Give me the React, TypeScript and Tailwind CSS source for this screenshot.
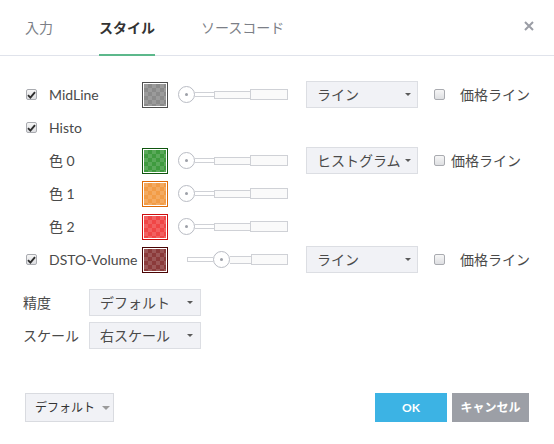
import { Fragment } from "react";

const tabs = ["入力", "スタイル", "ソースコード"];

function Check({ checked }: { checked: boolean }) {
  return (
    <span className="flex h-[11px] w-[11px] items-center justify-center rounded-[2px] border border-[#a9abb0] bg-gradient-to-b from-[#f6f6f6] to-[#dedfe2]">
      {checked && (
        <svg width="9" height="8" viewBox="0 0 9 8">
          <path d="M1 4.2 L3.4 6.6 L8 1.2" fill="none" stroke="#2e2e2e" strokeWidth="1.9" />
        </svg>
      )}
    </span>
  );
}

function Caret({ size = 6, color = "#5a5a5a" }: { size?: number; color?: string }) {
  return (
    <svg width={size} height={size / 2} viewBox="0 0 6 3">
      <path d="M0 0 H6 L3 3 Z" fill={color} />
    </svg>
  );
}

function Swatch({ id, border, fill }: { id: string; border: string; fill: string }) {
  return (
    <span className="flex h-[26px] w-[26px] items-center justify-center border bg-white" style={{ borderColor: border }}>
      <svg width="22" height="22" viewBox="0 0 22 22">
        <defs>
          <pattern id={id} width="8" height="8" patternUnits="userSpaceOnUse">
            <rect width="4" height="4" fill="#fff" fillOpacity="0.14" />
            <rect x="4" y="4" width="4" height="4" fill="#fff" fillOpacity="0.14" />
          </pattern>
        </defs>
        <rect width="22" height="22" fill={fill} />
        <rect width="22" height="22" fill={`url(#${id})`} />
      </svg>
    </span>
  );
}

function Knob() {
  return (
    <span className="flex h-[17px] w-[17px] shrink-0 items-center justify-center rounded-full border border-[#b9bcc4] bg-white">
      <span className="h-[3px] w-[3px] rounded-full bg-[#9da0a8]" />
    </span>
  );
}

function Slider({ right }: { right?: boolean }) {
  const thin = "h-[5px] border-y border-[#cfd1d6] bg-white";
  return (
    <div className="ml-[10px] flex w-[110px] items-center">
      {right ? (
        <Fragment>
          <span className={`ml-[9px] w-[26px] border-l ${thin}`} />
          <Knob />
          <span className="h-[8px] w-[21px] border-y border-[#cfd1d6] bg-[#fafafa]" />
        </Fragment>
      ) : (
        <Fragment>
          <Knob />
          <span className={`w-[19px] ${thin}`} />
          <span className="h-[8px] w-[36px] border-y border-l border-[#cfd1d6] bg-[#fafafa]" />
        </Fragment>
      )}
      <span className="h-[11px] flex-1 border border-[#cfd1d6] bg-[#fafafa]" />
    </div>
  );
}

function Select({ text, className = "" }: { text: string; className?: string }) {
  return (
    <div className={`flex h-[27px] items-center justify-between border border-[#dcdee3] bg-[#f1f2f6] text-[#4a4a4a] ${className}`}>
      <span className="whitespace-nowrap">{text}</span>
      <Caret />
    </div>
  );
}

type Row = {
  label: string;
  check?: boolean;
  swatch?: { border: string; fill: string };
  slider?: "left" | "right";
  select?: string;
  gap?: string;
};

const rows: Row[] = [
  { label: "MidLine", check: true, swatch: { border: "#4f4f4f", fill: "#8b8b8b" }, slider: "left", select: "ライン" },
  { label: "Histo", check: true },
  { label: "色 0", swatch: { border: "#0f560f", fill: "#3f9b3f" }, slider: "left", select: "ヒストグラム", gap: "ml-[6px]" },
  { label: "色 1", swatch: { border: "#dd6a06", fill: "#f29c46" }, slider: "left" },
  { label: "色 2", swatch: { border: "#cf0d0d", fill: "#f04646" }, slider: "left" },
  { label: "DSTO-Volume", check: true, swatch: { border: "#4a0404", fill: "#8b3a3a" }, slider: "right", select: "ライン" }
];

export default function App() {
  return (
    <div className="flex h-[444px] w-[554px] flex-col bg-white font-['Lato','Noto_Sans_CJK_JP',sans-serif] text-[14px] text-[#4a4a4a]">
      <header className="flex h-[56px] items-stretch border-b border-[#e0e3eb] pl-[25px]">
        {tabs.map((t, i) => (
          <div key={t} className={`relative flex items-center pb-[1px] ${i > 0 ? "ml-[46px]" : ""} ${i === 1 ? "font-bold text-[#333]" : "text-[#7c7f87]"}`}>
            {t}
            {i === 1 && <span className="absolute -bottom-px left-0 right-0 h-[2px] bg-[#5cb88b]" />}
          </div>
        ))}
        <div className="ml-auto mr-[20px] flex items-center pb-[4px]">
          <svg width="10" height="10" viewBox="0 0 10 10">
            <path d="M1 1 L9 9 M9 1 L1 9" stroke="#9a9da5" strokeWidth="2" />
          </svg>
        </div>
      </header>

      <div className="pt-[22px]">
        {rows.map((r, i) => (
          <div key={r.label} className="flex h-[33px] items-center pl-[26px]">
            <span className="w-[23px]">{r.check && <Check checked />}</span>
            <span className="w-[93px]">{r.label}</span>
            {r.swatch && <Swatch id={`chk${i}`} border={r.swatch.border} fill={r.swatch.fill} />}
            {r.slider && <Slider right={r.slider === "right"} />}
            {r.select && (
              <Fragment>
                <Select text={r.select} className="ml-[18px] w-[112px] pl-[10px] pr-[6px]" />
                <span className="ml-[16px]"><Check checked={false} /></span>
                <span className={r.gap ?? "ml-[15px]"}>価格ライン</span>
              </Fragment>
            )}
          </div>
        ))}

        <div className="mt-[10px] pl-[23px]">
          {[
            ["精度", "デフォルト"],
            ["スケール", "右スケール"]
          ].map(([l, v]) => (
            <div key={l} className="flex h-[33px] items-center">
              <span className="w-[66px]">{l}</span>
              <Select text={v} className="w-[112px] pl-[10px] pr-[7px]" />
            </div>
          ))}
        </div>
      </div>

      <footer className="mt-auto flex items-center px-[25px] pb-[22px] text-[12px]">
        <div className="flex h-[29px] w-[89px] items-center border border-[#d9dbe0] bg-[#f1f2f6] pl-[9px] text-[#333]">
          <span className="mr-[7px]">デフォルト</span>
          <Caret size={8} color="#9a9a9a" />
        </div>
        <button className="ml-auto h-[29px] w-[72px] bg-[#3cb3e4] font-bold text-white">OK</button>
        <button className="ml-[5px] h-[29px] w-[77px] bg-[#9c9fa6] font-bold text-white">キャンセル</button>
      </footer>
    </div>
  );
}
